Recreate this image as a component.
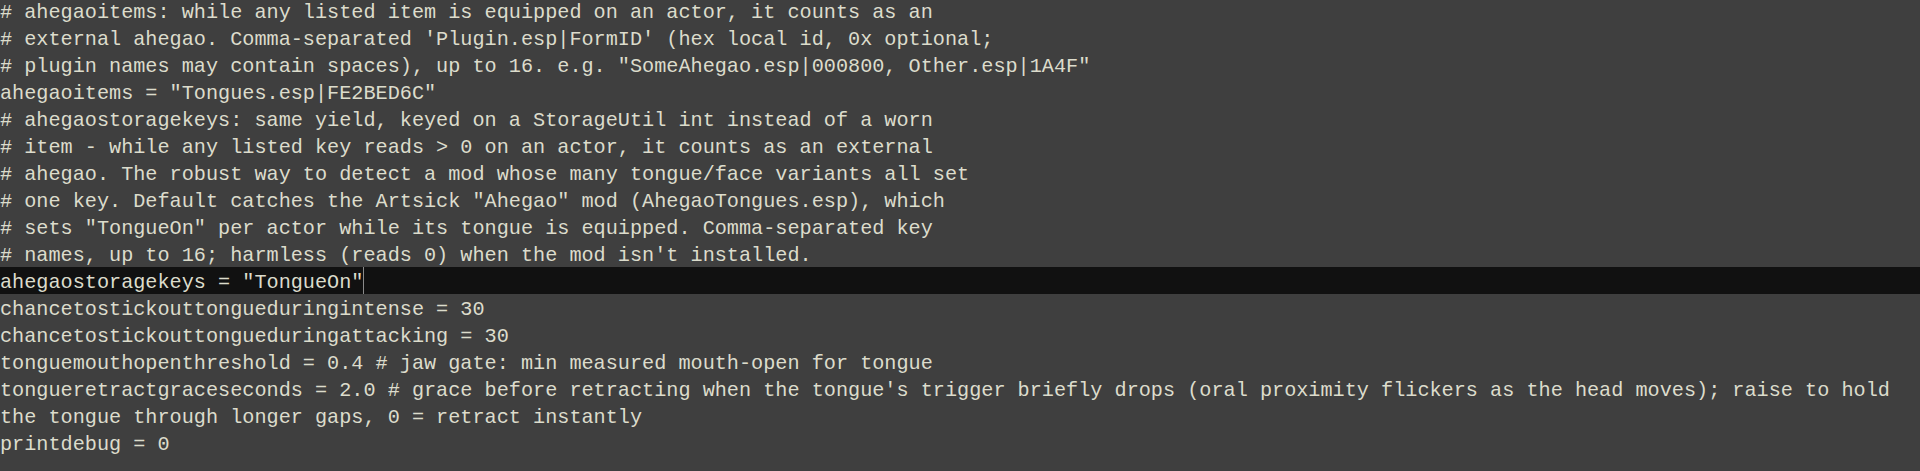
const lines: string[] = [
  "# ahegaoitems: while any listed item is equipped on an actor, it counts as an",
  "# external ahegao. Comma-separated 'Plugin.esp|FormID' (hex local id, 0x optional;",
  '# plugin names may contain spaces), up to 16. e.g. "SomeAhegao.esp|000800, Other.esp|1A4F"',
  'ahegaoitems = "Tongues.esp|FE2BED6C"',
  "# ahegaostoragekeys: same yield, keyed on a StorageUtil int instead of a worn",
  "# item - while any listed key reads > 0 on an actor, it counts as an external",
  "# ahegao. The robust way to detect a mod whose many tongue/face variants all set",
  '# one key. Default catches the Artsick "Ahegao" mod (AhegaoTongues.esp), which',
  '# sets "TongueOn" per actor while its tongue is equipped. Comma-separated key',
  "# names, up to 16; harmless (reads 0) when the mod isn't installed.",
  'ahegaostoragekeys = "TongueOn"',
  "chancetostickouttongueduringintense = 30",
  "chancetostickouttongueduringattacking = 30",
  "tonguemouthopenthreshold = 0.4 # jaw gate: min measured mouth-open for tongue",
  "tongueretractgraceseconds = 2.0 # grace before retracting when the tongue's trigger briefly drops (oral proximity flickers as the head moves); raise to hold",
  "the tongue through longer gaps, 0 = retract instantly",
  "printdebug = 0",
];

const ACTIVE = 10;

export default function App() {
  return (
    <div className="w-[1920px] h-[471px] overflow-hidden bg-[#3f3f3f] text-[#dcdccc] font-['Liberation_Mono',monospace] text-[20.2px]">
      <div className="-mt-[3px]">
        {lines.map((line, i) => (
          <div
            key={i}
            className={
              "h-[27px] pt-[2px] leading-[27px] whitespace-pre " +
              (i === ACTIVE ? "bg-[#111111]" : "")
            }
          >
            {line}
            {i === ACTIVE && (
              <span className="inline-block w-px h-[27px] -mt-[2px] bg-[#8a8a8a] align-top" />
            )}
          </div>
        ))}
      </div>
    </div>
  );
}
